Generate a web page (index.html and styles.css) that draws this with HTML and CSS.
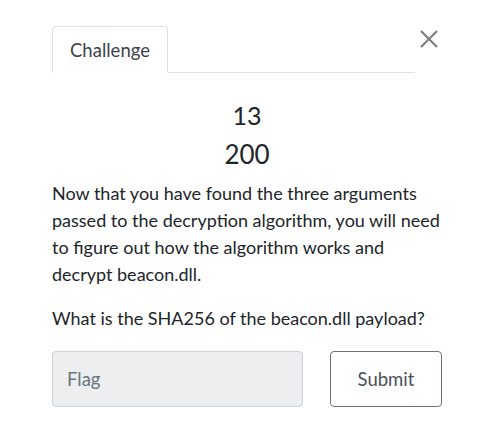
FILE: index.html
```html
<!DOCTYPE html>
<html>
<head>
<meta charset="utf-8">
<link rel="stylesheet" href="styles.css">
</head>
<body>
<div class="modal">
  <div class="header">
    <div class="nav">
      <div class="tab">Challenge</div>
    </div>
    <button class="close" aria-label="Close">
      <svg width="20" height="20" viewBox="0 0 20 20"><path d="M2 2 L18 18 M18 2 L2 18" stroke="#7a7a7a" stroke-width="2" fill="none"/></svg>
    </button>
  </div>
  <div class="name">13</div>
  <div class="value">200</div>
  <p class="desc">Now that you have found the three arguments passed to the decryption algorithm, you will need to figure out how the algorithm works and decrypt beacon.dll.</p>
  <p class="desc q">What is the SHA256 of the beacon.dll payload?</p>
  <div class="form">
    <input class="flag" type="text" placeholder="Flag">
    <button class="submit">Submit</button>
  </div>
</div>
</body>
</html>
```
FILE: styles.css
```css
* { box-sizing: border-box; }
html, body { margin: 0; background: #fff; }
body { font-family: Lato, "Noto Sans", sans-serif; color: #212529; }
.modal { padding: 26px 0 0 52px; width: 442px; }
.header { display: flex; align-items: flex-start; }
.nav { flex: 1; border-bottom: 1px solid #dee2e6; display: flex; }
.tab {
  width: 116px; height: 47px; margin-bottom: -1px;
  border: 1px solid #dee2e6; border-bottom-color: #fff;
  border-radius: 4px 4px 0 0;
  font-size: 18.5px; color: #3d434a;
  display: flex; align-items: center; justify-content: center;
}
.close {
  border: 0; background: none; padding: 0; margin: 3px 3px 0 4px;
  width: 20px; height: 20px; display: block;
}
.close svg { display: block; }
.name { text-align: center; font-size: 25px; margin-top: 28px; line-height: 29px; }
.value { text-align: center; font-size: 26px; line-height: 30px; margin-top: 9px; }
.desc { font-size: 18px; line-height: 27px; margin: 11px 0 0; }
.q { margin-top: 17px; }
.form { display: flex; gap: 27px; margin-top: 19px; }
.flag {
  width: 251px; height: 56px; background: #eceeef; border: 1px solid #ced4da;
  border-radius: 4px; padding: 0 14px; font-family: Lato, sans-serif; font-size: 18.5px; color: #495057;
}
.flag::placeholder { color: #6c757d; }
.submit {
  width: 112px; height: 56px; background: #fff; border: 1px solid #6c757d; border-radius: 4px;
  font-family: Lato, sans-serif; font-size: 18.5px; color: #495057;
}
```
